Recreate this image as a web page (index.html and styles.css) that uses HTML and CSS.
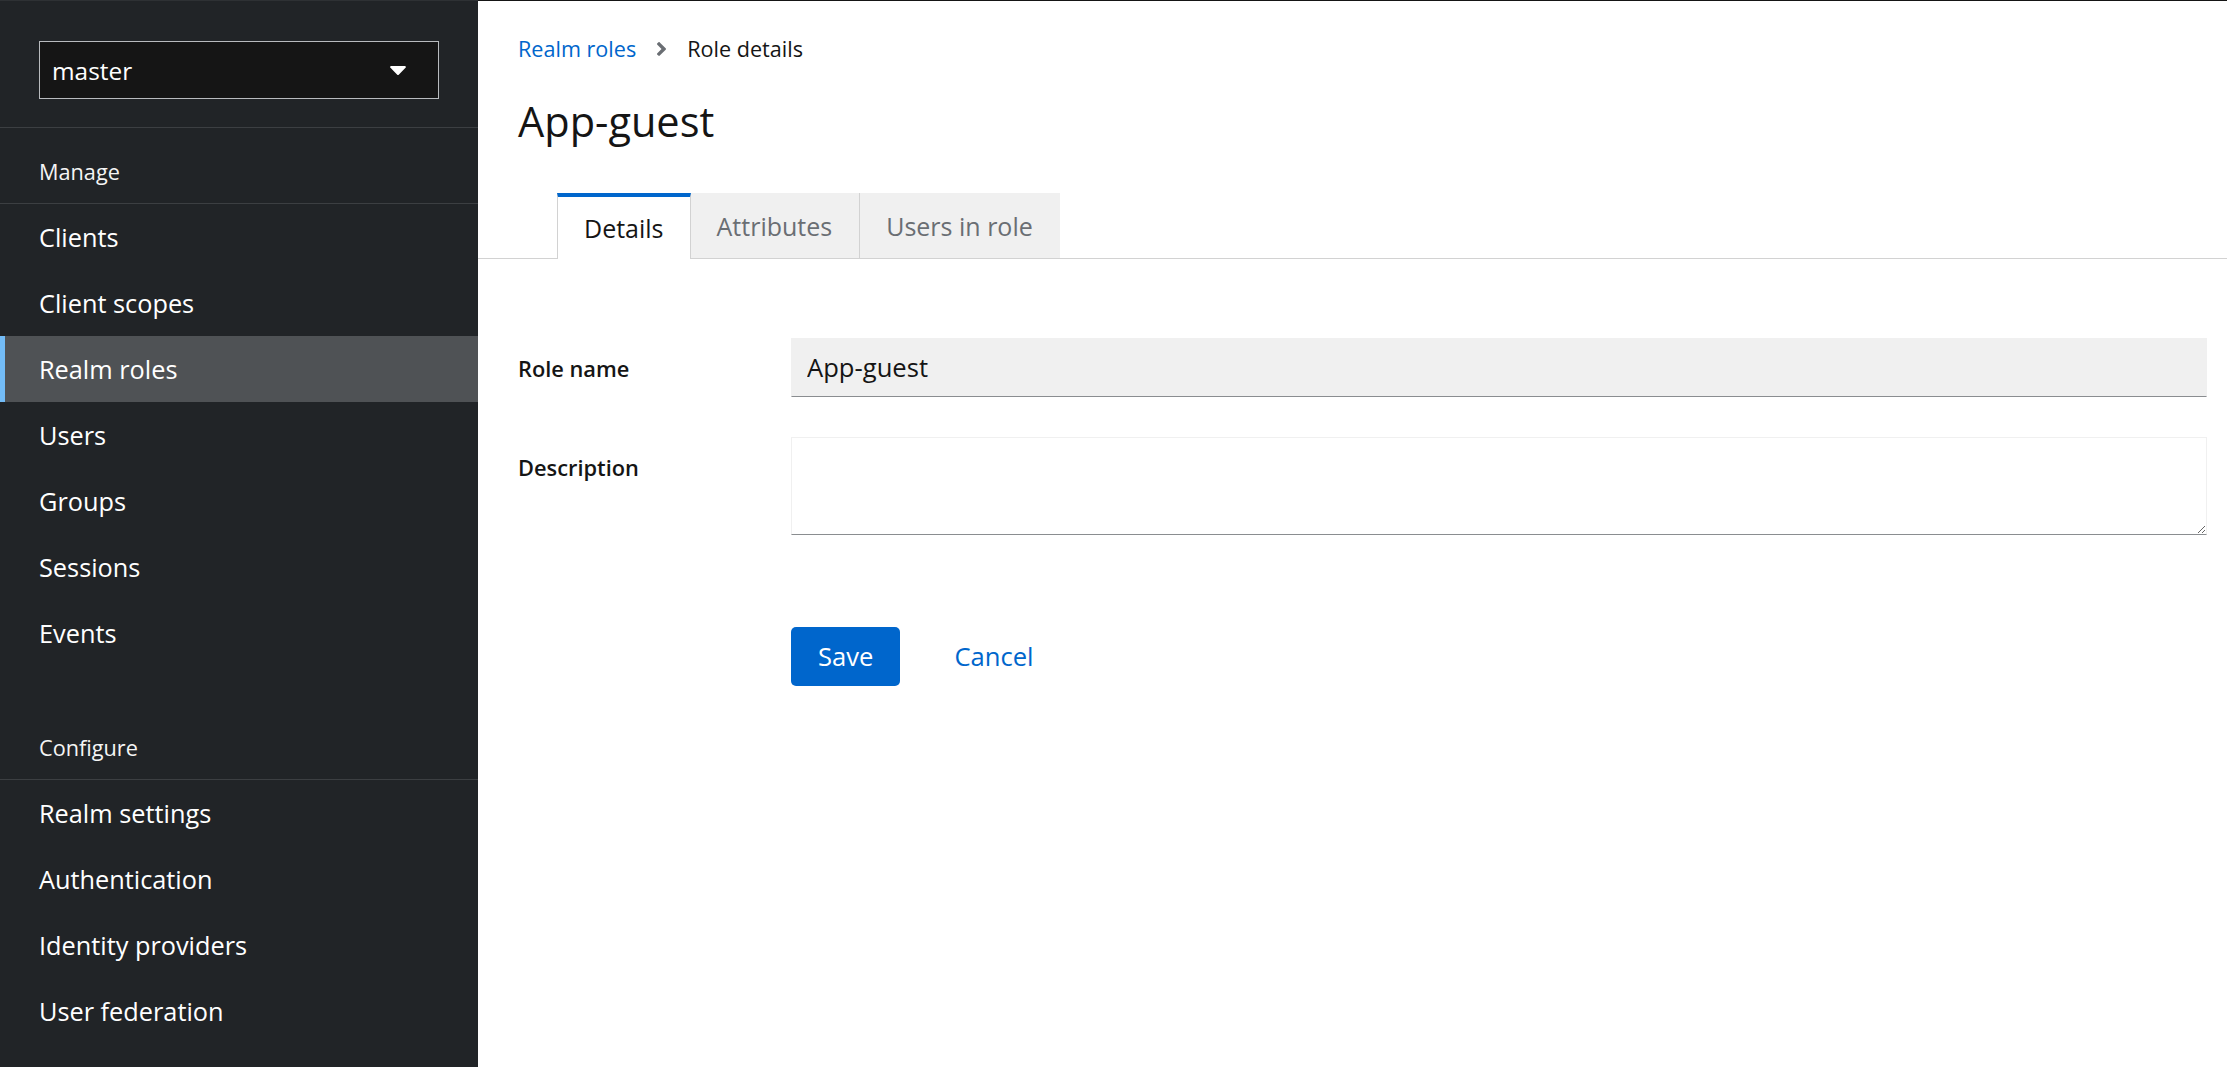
FILE: index.html
```html
<!DOCTYPE html>
<html lang="en">
<head>
<meta charset="utf-8">
<title>Role details</title>
<link rel="stylesheet" href="styles.css">
</head>
<body>
<aside class="sidebar">
  <div class="realm">
    <div class="realm-select">
      <span class="realm-name">master</span>
      <svg class="caret" width="16" height="9" viewBox="8 192 304 168" aria-hidden="true"><path fill="#fff" d="M31.3 192h257.3c17.8 0 26.7 21.5 14.1 34.1L174.1 354.8c-7.8 7.8-20.5 7.8-28.3 0L17.2 226.1C4.6 213.5 13.5 192 31.3 192z"/></svg>
    </div>
  </div>
  <nav>
    <section class="nav-section">
      <h2 class="nav-title">Manage</h2>
      <ul class="nav-list">
        <li class="nav-item">Clients</li>
        <li class="nav-item">Client scopes</li>
        <li class="nav-item active">Realm roles</li>
        <li class="nav-item">Users</li>
        <li class="nav-item">Groups</li>
        <li class="nav-item">Sessions</li>
        <li class="nav-item">Events</li>
      </ul>
    </section>
    <section class="nav-section second">
      <h2 class="nav-title">Configure</h2>
      <ul class="nav-list">
        <li class="nav-item">Realm settings</li>
        <li class="nav-item">Authentication</li>
        <li class="nav-item">Identity providers</li>
        <li class="nav-item">User federation</li>
      </ul>
    </section>
  </nav>
</aside>
<main class="main">
  <header class="page-header">
    <div class="breadcrumb">
      <a class="crumb-link" href="#">Realm roles</a>
      <svg class="crumb-sep" width="9" height="14" viewBox="24 96 208 320" aria-hidden="true"><path fill="#6a6e73" d="M224.3 273l-136 136c-9.4 9.4-24.6 9.4-33.9 0l-22.6-22.6c-9.4-9.4-9.4-24.6 0-33.9l96.4-96.4-96.4-96.4c-9.4-9.4-9.4-24.6 0-33.9L54.3 103c9.4-9.4 24.6-9.4 33.9 0l136 136c9.5 9.4 9.5 24.6.1 34z"/></svg>
      <span class="crumb-current">Role details</span>
    </div>
    <h1 class="title">App-guest</h1>
  </header>
  <div class="tabs">
    <div class="tab active">Details</div>
    <div class="tab bordered">Attributes</div>
    <div class="tab">Users in role</div>
  </div>
  <form class="form">
    <label class="label" for="rolename">Role name</label>
    <input class="input" id="rolename" type="text" value="App-guest" readonly>
    <label class="label" for="desc">Description</label>
    <textarea class="textarea" id="desc"></textarea>
    <div class="actions">
      <button type="button" class="btn primary">Save</button>
      <button type="button" class="btn link">Cancel</button>
    </div>
  </form>
</main>
</body>
</html>
```
FILE: styles.css
```css
* { box-sizing: border-box; }
html, body { height: 100%; }
body {
  margin: 0;
  display: flex;
  font-family: "Open Sans", "Noto Sans", sans-serif;
  color: #151515;
  background: #fff;
  overflow: hidden;
}

/* Sidebar */
.sidebar {
  width: 478px;
  flex: 0 0 478px;
  background: #212427;
  color: #fff;
  border-top: 1px solid #2e3134;
}
.realm {
  padding: 40px 39px 28px 39px;
  border-bottom: 1px solid #3c3f42;
}
.realm-select {
  height: 58px;
  background: #151515;
  border: 1px solid #b8bbbe;
  display: flex;
  align-items: center;
  justify-content: space-between;
  padding: 0 32px 0 12px;
}
.realm-name {
  font-size: 24.4px;
  color: #fff;
}
.caret { display: block; }
.nav-section.second { margin-top: 38px; }
.nav-title {
  margin: 0;
  font-size: 21.7px;
  font-weight: 400;
  line-height: 30px;
  padding: 29px 39px 16px;
  color: #f5f5f5;
  border-bottom: 1px solid #3c3f42;
}
.nav-list {
  list-style: none;
  margin: 0;
  padding: 0;
}
.nav-item {
  height: 66px;
  line-height: 66px;
  padding-left: 39px;
  font-size: 25.3px;
  color: #fff;
}
.nav-item.active {
  background: #4f5255;
  border-left: 5px solid #73bcf7;
  padding-left: 34px;
}

/* Main */
.main {
  flex: 1;
  border-top: 1px solid #151515;
  min-width: 0;
}
.page-header {
  padding: 33px 40px 0 40px;
}
.breadcrumb {
  display: flex;
  align-items: center;
  height: 30px;
  font-size: 21.6px;
  line-height: 30px;
}
.crumb-link {
  color: #0066cc;
  text-decoration: none;
}
.crumb-sep {
  margin: 0 21px;
  display: block;
}
.crumb-current { color: #151515; }
.title {
  margin: 33px 0 0 0;
  font-size: 41.5px;
  font-weight: 400;
  line-height: 48px;
  color: #151515;
}

/* Tabs */
.tabs {
  display: flex;
  margin-top: 48px;
  padding-left: 79px;
  border-bottom: 1px solid #d2d2d2;
}
.tab {
  height: 65px;
  display: flex;
  align-items: center;
  padding: 0 27px 0 26px;
  background: #f0f0f0;
  color: #6a6e73;
  font-size: 25px;
}
.tab.bordered { border-right: 1px solid #d2d2d2; }
.tab.active {
  height: 66px;
  margin-bottom: -1px;
  background: #fff;
  color: #151515;
  border-top: 4px solid #0066cc;
  border-left: 1px solid #d2d2d2;
  border-right: 1px solid #d2d2d2;
  padding: 0 26px;
}

/* Form */
.form {
  display: grid;
  grid-template-columns: 273px 1fr;
  row-gap: 40px;
  padding: 79px 20px 0 40px;
}
.label {
  font-size: 21.8px;
  font-weight: 600;
  line-height: 30px;
  padding-top: 16px;
  color: #151515;
}
.input {
  height: 59px;
  width: 100%;
  background: #f0f0f0;
  border: 1px solid #f0f0f0;
  border-bottom-color: #8a8d90;
  padding: 0 15px;
  font-family: inherit;
  font-size: 25.6px;
  color: #151515;
  outline: none;
}
.textarea {
  height: 98px;
  width: 100%;
  background: #fff;
  border: 1px solid #f0f0f0;
  border-bottom-color: #8a8d90;
  padding: 8px 15px;
  font-family: inherit;
  font-size: 25.6px;
  resize: vertical;
  outline: none;
  display: block;
}
.actions {
  grid-column: 2;
  display: flex;
  gap: 27px;
  margin-top: 52px;
}
.btn {
  height: 59px;
  padding: 0 27px;
  font-family: inherit;
  font-size: 25.6px;
  border: 0;
  border-radius: 5px;
  cursor: pointer;
}
.btn.primary {
  background: #0066cc;
  color: #fff;
}
.btn.link {
  background: transparent;
  color: #0066cc;
}
```
